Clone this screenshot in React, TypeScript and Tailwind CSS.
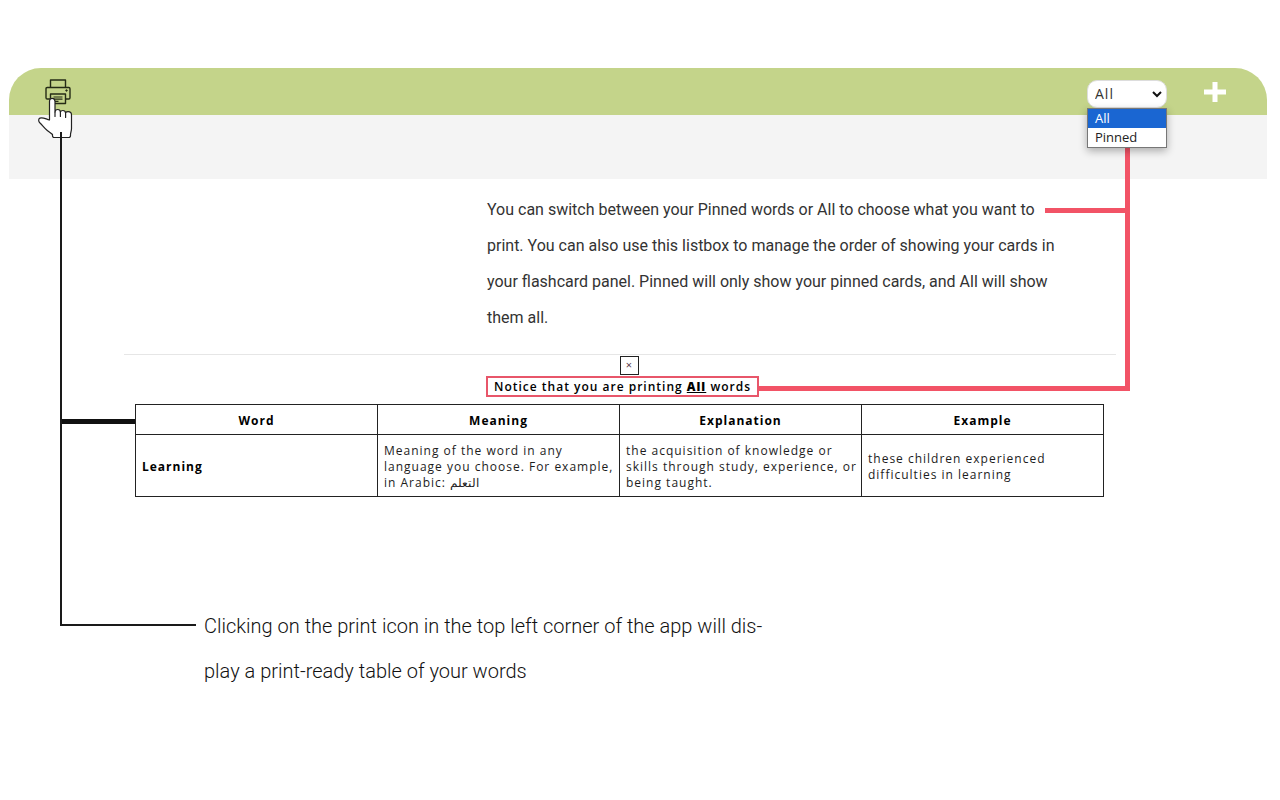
import { useState } from 'react';

const columns = ['Word', 'Meaning', 'Explanation', 'Example'];

const cellClass = 'border border-[#222] px-1.5 pt-0.5';

function PrinterIcon() {
  return (
    <svg
      viewBox="0 0 26 26"
      className="h-[26px] w-[26px]"
      fill="none"
      stroke="#252b16"
      strokeWidth="1.4"
      strokeLinejoin="round"
    >
      <path d="M5.5 8.5V1h15v7.5" />
      <path d="M5.5 20H2.2A1.2 1.2 0 0 1 1 18.8V9.7a1.2 1.2 0 0 1 1.2-1.2h21.6A1.2 1.2 0 0 1 25 9.7v9.1a1.2 1.2 0 0 1-1.2 1.2h-3.3" />
      <path d="M5.5 24.5V15h15v9.5z" />
      <path d="M8.5 18h9M8.5 20.2h9M8.5 22.4h5" strokeWidth="1.2" />
      <circle cx="21.5" cy="11.5" r="0.8" fill="#252b16" strokeWidth="0.8" />
    </svg>
  );
}

function HandPointer() {
  return (
    <svg
      viewBox="0 0 36 42"
      className="pointer-events-none absolute top-[97px] left-[37px] h-[42px] w-9"
      fill="#fff"
      stroke="#222"
      strokeWidth="1.2"
      strokeLinejoin="round"
      strokeLinecap="round"
    >
      <path d="M12.5 23V4.5C12.5 2.4 13.8 1.3 15.2 1.3S18 2.4 18 4.5V15c.2-1.7 1.3-2.5 2.7-2.5 1.6 0 2.6 1 2.7 2.5.4-1 1.3-1.5 2.5-1.5 1.5 0 2.5.9 2.7 2.3.5-.8 1.3-1.1 2.5-1.1 2 0 3.4 1.2 3.4 3.2v13.5c0 2.6-.9 4.1-1 6.1v1.2a1.8 1.8 0 0 1-1.8 1.8H17.5c-1.3 0-2-.8-2-1.8v-1.2c-1.4-1.6-3.5-2.6-5.5-4.2-2.8-2.2-4.5-5-7-7.3-1.8-1.6-1.7-4.2-.1-4.9 2.7-1.2 5.8.9 9.6 1.9z" />
      <path d="M18 15v4.5M23.4 15v4.5M28.6 16v4.5" fill="none" />
    </svg>
  );
}

function WordFilter() {
  const [filter, setFilter] = useState('All');

  return (
    <div className="relative w-20">
      <select
        aria-label="Words to show"
        value={filter}
        onChange={(e) => setFilter(e.target.value)}
        className="block h-7 w-full appearance-none rounded-[10px] border border-[#ddd] bg-white px-[7px] text-sm tracking-[1px] text-[#333]"
      >
        <option>All</option>
        <option>Pinned</option>
      </select>
      <svg
        viewBox="0 0 10 7"
        className="pointer-events-none absolute top-[11px] right-[5px] h-[7px] w-2.5"
        fill="none"
        stroke="#111"
        strokeWidth="2"
      >
        <path d="M1 1l4 4 4-4" />
      </svg>
      <ul
        role="listbox"
        aria-label="Word filter"
        className="absolute top-7 left-0 z-10 w-20 border border-[#777] bg-white text-[13px] leading-[19px] shadow-[0_3px_8px_rgba(0,0,0,0.3)]"
      >
        {['All', 'Pinned'].map((name) => (
          <li
            key={name}
            role="option"
            aria-selected={name === filter}
            onClick={() => setFilter(name)}
            className={
              name === filter
                ? 'bg-[#1a66d2] px-[7px] text-white'
                : 'px-[7px] text-[#222]'
            }
          >
            {name}
          </li>
        ))}
      </ul>
    </div>
  );
}

export default function App() {
  return (
    <main className="relative min-h-screen bg-white pt-[68px] font-['Open_Sans','Noto_Sans',sans-serif] text-[#1c1c1c]">
      <header className="mr-[13px] ml-[9px] flex h-[47px] items-center rounded-t-[32px] bg-[#c4d48a] pr-[41px] pl-9">
        <button type="button" aria-label="Print" className="block">
          <PrinterIcon />
        </button>
        <div className="mt-1 ml-auto">
          <WordFilter />
        </div>
        <button type="button" aria-label="Add card" className="ml-[37px]">
          <svg viewBox="0 0 22 20" className="h-5 w-[22px]" fill="#fff">
            <path d="M8.5 0h5v7.5H22v5h-8.5V20h-5v-7.5H0v-5h8.5z" />
          </svg>
        </button>
      </header>
      <div className="mr-[13px] ml-[9px] h-16 bg-[#f4f4f4]" />

      {/* connectors */}
      <HandPointer />
      <div className="absolute top-[132px] left-[60px] h-[494px] w-0.5 bg-[#1a1a1a]" />
      <div className="absolute top-[148px] right-[150px] h-[243px] w-[5px] bg-[#f25366]" />
      <div className="absolute top-[208px] right-[150px] h-[5px] w-[85px] bg-[#f25366]" />

      <p className="mr-[150px] ml-[487px] pt-[13px] font-['Roboto',sans-serif] text-base leading-9 whitespace-nowrap text-[#333]">
        You can switch between your Pinned words or All to choose what you want to
        <br />
        print. You can also use this listbox to manage the order of showing your cards in
        <br />
        your flashcard panel. Pinned will only show your pinned cards, and All will show
        <br />
        them all.
      </p>

      <section className="mt-[18px]">
        <hr className="mr-[164px] ml-[124px] border-[#e6e6e6]" />
        <div className="mr-[150px] ml-[128px] flex justify-center">
          <button
            type="button"
            aria-label="Close"
            className="mt-px flex h-[19px] w-[19px] items-center justify-center border border-[#222] pb-0.5 text-[11px] leading-none text-[#5b3a4a]"
          >
            ×
          </button>
        </div>
        <div className="mt-px mr-[150px] ml-[115px] grid grid-cols-[1fr_auto_1fr] items-center">
          <p className="col-start-2 border-2 border-[#e8566a] px-1.5 text-xs leading-[17px] font-semibold tracking-[1px] text-black">
            Notice that you are printing <b className="underline">All</b> words
          </p>
          <div className="mt-[3px] h-[5px] bg-[#f25366]" />
        </div>
        <div className="mt-[7px] mr-[176px] ml-[60px] flex items-start">
          <div className="mt-[15px] h-[5px] w-[75px] shrink-0 bg-[#111]" />
          <div className="flex-1">
            <table className="w-full table-fixed border-collapse text-xs leading-4 tracking-[1px] whitespace-nowrap">
              <thead>
                <tr className="h-[30px]">
                  {columns.map((name) => (
                    <th key={name} scope="col" className={`${cellClass} font-bold text-black`}>
                      {name}
                    </th>
                  ))}
                </tr>
              </thead>
              <tbody>
                <tr className="h-[62px]">
                  <th scope="row" className={`${cellClass} text-left font-bold text-black`}>
                    Learning
                  </th>
                  <td className={cellClass}>
                    Meaning of the word in any
                    <br />
                    language you choose. For example,
                    <br />
                    in Arabic: <span lang="ar">التعلم</span>
                  </td>
                  <td className={cellClass}>
                    the acquisition of knowledge or
                    <br />
                    skills through study, experience, or
                    <br />
                    being taught.
                  </td>
                  <td className={cellClass}>
                    these children experienced
                    <br />
                    difficulties in learning
                  </td>
                </tr>
              </tbody>
            </table>
          </div>
        </div>
      </section>

      <footer className="mt-[107px] ml-[60px] flex items-start">
        <div className="mt-5 h-0.5 w-[136px] shrink-0 bg-[#1a1a1a]" />
        <p className="ml-2 font-['Roboto',sans-serif] text-xl leading-[45px] font-light whitespace-nowrap text-[#111]">
          Clicking on the print icon in the top left corner of the app will dis-
          <br />
          play a print-ready table of your words
        </p>
      </footer>
    </main>
  );
}
